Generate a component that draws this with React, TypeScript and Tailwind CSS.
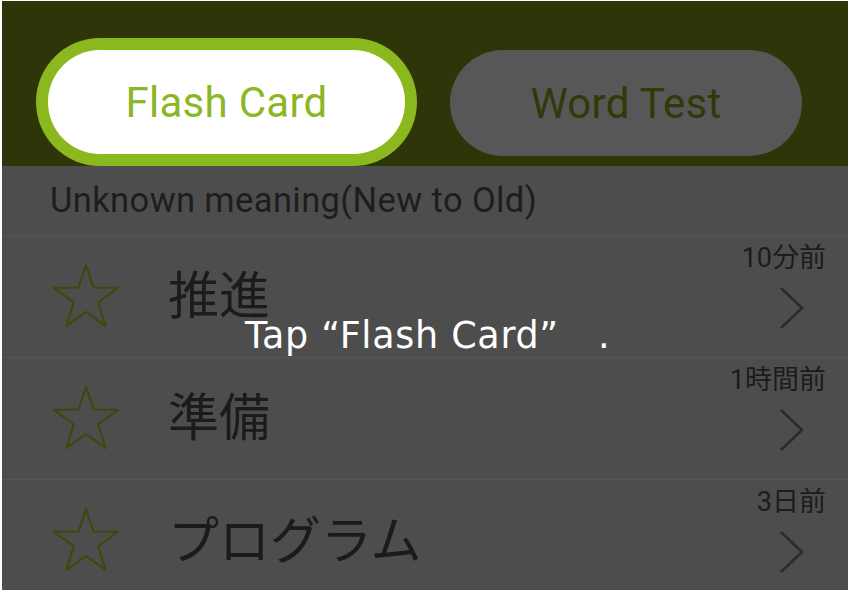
import React from 'react';

interface Word {
    text: string;
    ago: string;
}

const words: Word[] = [
    { text: '推進', ago: '10分前' },
    { text: '準備', ago: '1時間前' },
    { text: 'プログラム', ago: '3日前' },
];

const jp = { fontFamily: 'Roboto, "Noto Sans CJK JP", sans-serif' };

const StarIcon: React.FC = () => (
    <svg width="68" height="66" viewBox="0 0 68 66" fill="none">
        <path
            d="M34 2 L41.5 24.5 L66 24.8 L46.2 39.3 L53.6 63 L34 48.8 L14.4 63 L21.8 39.3 L2 24.8 L26.5 24.5 Z"
            stroke="#3b4a0c"
            strokeWidth="2.2"
            strokeLinejoin="round"
        />
    </svg>
);

const Chevron: React.FC = () => (
    <svg width="28" height="44" viewBox="0 0 28 44" fill="none">
        <path d="M3 2 L24 22 L3 42" stroke="#2b2b2b" strokeWidth="2.6" />
    </svg>
);

const WordRow: React.FC<{ word: Word; last?: boolean }> = ({ word, last }) => (
    <div className={`relative flex items-center h-[122px] ${last ? '' : 'border-b border-[#565656]'}`}>
        <div className="ml-[50px] mt-[-2px]">
            <StarIcon />
        </div>
        <span className="ml-[48px] text-[51px] leading-none text-[#1b1b1b]" style={jp}>
            {word.text}
        </span>
        <div className="ml-auto mr-[22px] flex flex-col items-end self-start pt-[9px]">
            <span className="text-[27px] leading-none text-[#1c1c1c]" style={jp}>{word.ago}</span>
            <div className="mt-[14px] mr-[20px]">
                <Chevron />
            </div>
        </div>
    </div>
);

export default function App() {
    return (
        <div className="w-[851px] h-[594px] bg-white pl-[2px] pt-[1px]">
            <div className="relative w-[846px] h-[589px] bg-[#4d4d4d] overflow-hidden" style={{ fontFamily: 'Roboto, sans-serif' }}>
                {/* header with the two mode buttons */}
                <div className="flex items-start h-[165px] bg-[#2d3509]">
                    <div className="ml-[34px] mt-[37px] w-[381px] h-[128px] rounded-full bg-[#8bb81f] p-[12px]">
                        <div className="flex h-full items-center justify-center rounded-full bg-white">
                            <span className="text-[42px] text-[#8bb626] tracking-[0.3px]">Flash Card</span>
                        </div>
                    </div>
                    <div className="ml-[33px] mt-[49px] flex w-[352px] h-[106px] items-center justify-center rounded-full bg-[#575757]">
                        <span className="text-[42px] text-[#2f3a09] tracking-[0.3px]">Word Test</span>
                    </div>
                </div>

                <div className="flex items-center h-[70px] pl-[48px] border-b border-[#565656]">
                    <span className="text-[34.5px] text-[#1d1d1d] leading-none tracking-[0.4px]">Unknown meaning(New to Old)</span>
                </div>

                {words.map((w, i) => (
                    <WordRow key={w.text} word={w} last={i === words.length - 1} />
                ))}

                {/* tutorial hint over the list */}
                <div className="absolute left-[243px] top-[308px] whitespace-nowrap">
                    <span className="text-[36.5px] text-white tracking-[0.7px]" style={{ fontFamily: '"DejaVu Sans", sans-serif' }}>
                        Tap “Flash Card”
                    </span>
                    <span className="ml-[39px] text-[36.5px] text-white" style={{ fontFamily: '"DejaVu Sans", sans-serif' }}>.</span>
                </div>
            </div>
        </div>
    );
}
